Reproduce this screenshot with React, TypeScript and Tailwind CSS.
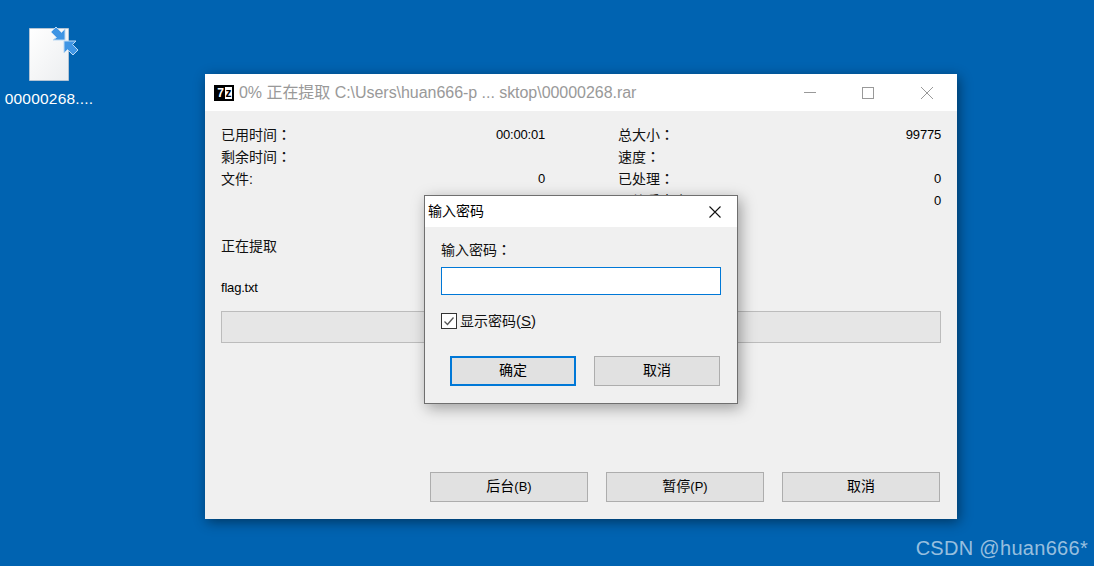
import React from 'react';

const font = { fontFamily: '"Liberation Sans", "Noto Sans CJK SC", sans-serif' };

const Btn: React.FC<{ label: React.ReactNode; primary?: boolean; w: string }> = ({ label, primary, w }) => (
  <div className={`${w} flex h-[30px] items-center justify-center bg-[#e1e1e1] pb-[2px] text-[14px] text-black ${primary ? 'border-2 border-[#0078d7]' : 'border border-[#adadad]'}`}>
    {label}
  </div>
);

// the full-width colon sits centred in the reference, the TC face draws it that way
const Colon = () => <span className="font-['Noto_Sans_CJK_TC'] font-medium">：</span>;

const Row: React.FC<{ label: string; colon?: boolean; value?: string; right?: boolean }> = ({ label, colon, value, right }) => (
  <div className={`flex h-[22px] items-center justify-between ${right ? 'w-[323px]' : 'w-[324px]'}`}>
    <span className="text-[14px] text-[#111]">{label}{colon && <Colon />}</span>
    <span className="text-[13px] tracking-[-0.2px] text-black">{value}</span>
  </div>
);

export default function App() {
  return (
    <div style={font} className="relative h-[566px] w-[1094px] overflow-hidden bg-[#0063b1]">
      {/* desktop icon */}
      <div className="absolute left-0 top-[26px] flex w-[98px] flex-col items-center">
        <svg width="56" height="56" viewBox="0 0 56 56" className="ml-[4px]">
          <defs>
            <linearGradient id="pg" x1="0" y1="0" x2="1" y2="1">
              <stop offset="0" stopColor="#ffffff" />
              <stop offset="1" stopColor="#eceef0" />
            </linearGradient>
          </defs>
          <path d="M6.500 2.500H45.500V54.500H6.500Z" fill="url(#pg)" stroke="#b4c4d4" strokeWidth="1" />
          <path d="M42 14V3L38.500 6.500L33 1L28 6L33.500 11.500L30 14Z" fill="#3f95e4" stroke="#bcd9f3" strokeWidth="1" />
          <path d="M41 15V27L44.500 23.500L50 29L55 24L49.500 18.500L53 15Z" fill="#3f95e4" stroke="#bcd9f3" strokeWidth="1" />
        </svg>
        <span className="mt-[8px] text-[15.500px] leading-[18px] tracking-[0.2px] text-white">00000268....</span>
      </div>

      {/* extraction window */}
      <div className="absolute left-[205px] top-[74px] flex h-[445px] w-[752px] flex-col bg-[#f0f0f0] shadow-[2px_3px_12px_rgba(0,0,0,0.45)]">
        <div className="flex h-[37px] items-center bg-white pl-[9px]">
          <div className="flex h-[16px] w-[20px] border-2 border-black bg-white font-bold leading-none">
            <span className="flex w-[9px] items-center justify-center bg-black text-[12px] text-white">7</span>
            <span className="flex flex-1 items-center justify-center text-[12px] text-black">z</span>
          </div>
          <span className="ml-[5px] text-[16px] tracking-[-0.04px] text-[#999]">0% 正在提取 C:\Users\huan666-p ... sktop\00000268.rar</span>
          <div className="ml-auto flex items-center gap-[46px] pr-[24px]">
            <svg width="12" height="12" viewBox="0 0 12 12"><path d="M0 5.500H12" stroke="#999" /></svg>
            <svg width="12" height="12" viewBox="0 0 12 12"><rect x="0.500" y="0.500" width="11" height="11" fill="none" stroke="#999" /></svg>
            <svg width="12" height="12" viewBox="0 0 12 12" className="ml-px"><path d="M0 0L12 12M12 0L0 12" stroke="#999" /></svg>
          </div>
        </div>

        <div className="flex flex-1 flex-col pl-[16px] pr-[16px] pt-[13px]">
          <div className="flex gap-[73px]">
            <div className="flex flex-col">
              <Row label="已用时间" colon value="00:00:01" />
              <Row label="剩余时间" colon />
              <Row label="文件:" value="0" />
            </div>
            <div className="flex flex-col">
              <Row right label="总大小" colon value="99775" />
              <Row right label="速度" colon />
              <Row right label="已处理" colon value="0" />
              <Row right label="压缩后大小" colon value="0" />
            </div>
          </div>
          <div className="mt-[23px] h-[22px] text-[14px] leading-[22px] text-[#111]">正在提取</div>
          <div className="mt-[20px] h-[22px] text-[13px] leading-[22px] tracking-[-0.2px] text-black">flag.txt</div>
          <div className="mt-[12px] h-[32px] w-[720px] border border-[#bcbcbc] bg-[#e6e6e6]" />
          <div className="ml-[209px] mt-[129px] flex gap-[18px]">
            <Btn w="w-[158px]" label={<span>后台<span className="text-[13px]">(B)</span></span>} />
            <Btn w="w-[158px]" label={<span>暂停<span className="text-[13px]">(P)</span></span>} />
            <Btn w="w-[158px]" label="取消" />
          </div>
        </div>
      </div>

      {/* password dialog */}
      <div className="absolute left-[424px] top-[195px] flex h-[209px] w-[314px] flex-col border border-[#6f6f6f] bg-[#f0f0f0] shadow-[3px_4px_14px_rgba(0,0,0,0.35)]">
        <div className="flex h-[31px] items-center justify-between bg-white pl-[3px] pr-[15px]">
          <span className="text-[14px] text-black">输入密码</span>
          <svg width="14" height="14" viewBox="0 0 14 14"><path d="M1.500 1.500L12.500 12.500M12.500 1.500L1.500 12.500" stroke="#111" strokeWidth="1.100" /></svg>
        </div>
        <div className="flex flex-1 flex-col pl-[16px]">
          <div className="mt-[12px] h-[20px] text-[14px] leading-[20px] text-[#111]">输入密码<Colon /></div>
          <div className="mt-[8px] h-[28px] w-[280px] border border-[#0078d7] bg-white" />
          <div className="mt-[16px] flex h-[20px] items-center">
            <div className="flex h-[16px] w-[16px] items-center justify-center border border-[#333] bg-white">
              <svg width="12" height="12" viewBox="0 0 12 12"><path d="M1.500 6.500L4.500 9.500L10.500 2.500" fill="none" stroke="#555" strokeWidth="1.300" /></svg>
            </div>
            <span className="ml-[3px] text-[14px] text-[#111]">显示密码<span className="text-[15px]">(<span className="underline">S</span>)</span></span>
          </div>
          <div className="ml-[9px] mt-[25px] flex gap-[18px]">
            <Btn primary w="w-[126px]" label="确定" />
            <Btn w="w-[126px]" label="取消" />
          </div>
        </div>
      </div>

      <span className="absolute right-[6px] top-[537px] text-[20px] leading-[22px] tracking-[0.3px] text-white/60">CSDN @huan666*</span>
    </div>
  );
}
